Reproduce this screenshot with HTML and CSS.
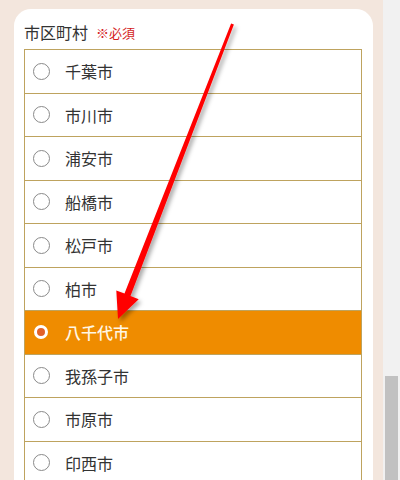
FILE: index.html
```html
<!DOCTYPE html>
<html lang="ja">
<head>
<meta charset="utf-8">
<title>市区町村</title>
<link rel="stylesheet" href="styles.css">
</head>
<body>
<div class="viewport">
  <main class="page">
    <section class="card">
      <div class="label">市区町村<span class="req">※必須</span></div>
      <ul class="options">
        <li class="opt"><span class="radio"></span><span class="name">千葉市</span></li>
        <li class="opt"><span class="radio"></span><span class="name">市川市</span></li>
        <li class="opt"><span class="radio"></span><span class="name">浦安市</span></li>
        <li class="opt"><span class="radio"></span><span class="name">船橋市</span></li>
        <li class="opt"><span class="radio"></span><span class="name">松戸市</span></li>
        <li class="opt"><span class="radio"></span><span class="name">柏市</span></li>
        <li class="opt selected"><span class="radio checked"></span><span class="name">八千代市</span></li>
        <li class="opt"><span class="radio"></span><span class="name">我孫子市</span></li>
        <li class="opt"><span class="radio"></span><span class="name">市原市</span></li>
        <li class="opt"><span class="radio"></span><span class="name">印西市</span></li>
        <li class="opt"><span class="radio"></span><span class="name">四街道市</span></li>
      </ul>
    </section>
  </main>
  <div class="scrollbar"><div class="thumb"></div></div>
</div>
<svg class="arrow" width="400" height="480" viewBox="0 0 400 480">
  <defs>
    <filter id="sh" x="-20%" y="-20%" width="140%" height="140%">
      <feDropShadow dx="2.5" dy="3" stdDeviation="2" flood-color="#000" flood-opacity="0.35"/>
    </filter>
  </defs>
  <polygon filter="url(#sh)" fill="#ff0000"
    points="231.1,23.4 233.9,24.6 130.5,296 138.7,299.2 118,319 116.3,290.4 124.5,293.6"/>
</svg>
</body>
</html>
```
FILE: styles.css
```css
html, body {
  margin: 0;
  padding: 0;
}
body {
  background: #f3e6dd;
  overflow: hidden;
  font-family: "Noto Sans CJK JP", "Noto Sans", sans-serif;
  color: #333;
  position: relative;
  width: 400px;
  height: 480px;
}
.viewport {
  display: flex;
  height: 480px;
}
.page {
  width: 383px;
  box-sizing: border-box;
  padding: 9px 10px 0 14px;
}
.card {
  background: #fff;
  border-radius: 17px 17px 0 0;
  padding: 13px 11px 0 10px;
  min-height: 600px;
}
.label {
  display: flex;
  align-items: center;
  height: 21px;
  font-size: 16px;
  line-height: 21px;
  margin-bottom: 6px;
  color: #333;
}
.req {
  font-size: 13px;
  color: #d41c1c;
  margin-left: 8px;
}
.options {
  list-style: none;
  margin: 0;
  padding: 0;
  border: 1px solid #bea35e;
}
.opt {
  display: flex;
  align-items: center;
  height: 42.5px;
  border-bottom: 1px solid #bea35e;
  font-size: 16px;
}
.radio {
  width: 17px;
  height: 17px;
  box-sizing: border-box;
  border: 1px solid #8a8a8a;
  border-radius: 50%;
  background: #fff;
  margin-left: 8px;
  margin-right: 15px;
  flex: none;
}
.radio.checked {
  width: 14px;
  height: 14px;
  border: 3px solid #fff;
  background: #e2622a;
  margin-left: 9px;
  margin-right: 17px;
}
.selected {
  background: #ef8c00;
}
.selected .name {
  color: #fff6e4;
  font-weight: 500;
}
.scrollbar {
  width: 17px;
  background: #f1f1f1;
  display: flex;
  flex-direction: column;
  align-items: center;
}
.thumb {
  margin-top: 376px;
  width: 13px;
  height: 110px;
  background: #c1c1c1;
}
.arrow {
  position: absolute;
  top: 0;
  left: 0;
  pointer-events: none;
}
```
